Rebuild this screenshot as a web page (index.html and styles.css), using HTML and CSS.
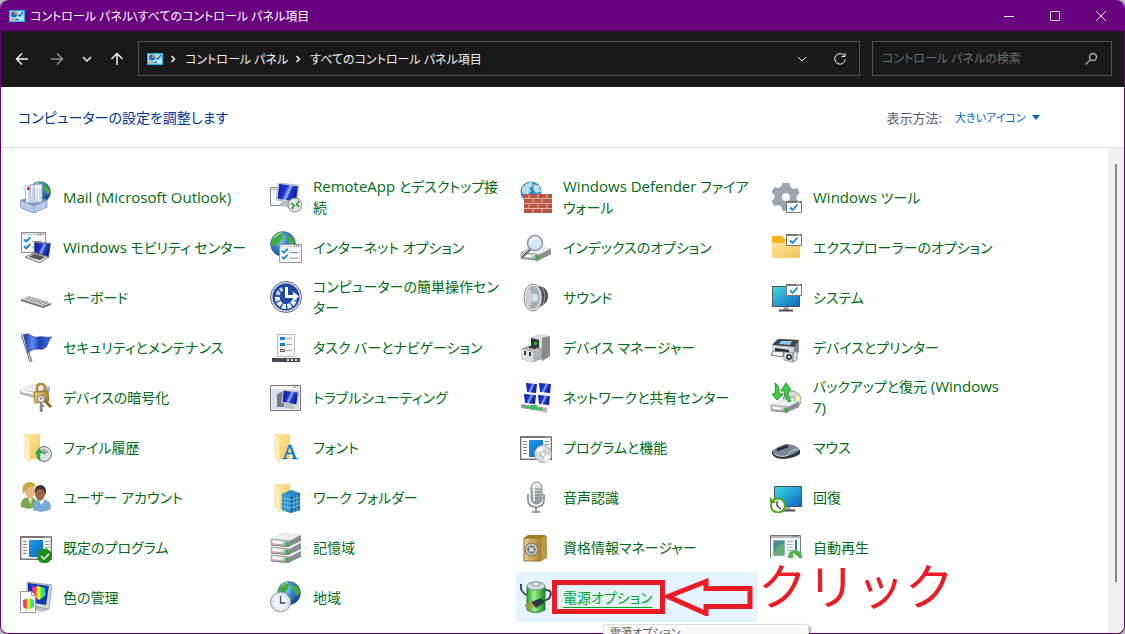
FILE: index.html
```html
<!DOCTYPE html>
<html lang="ja">
<head>
    <meta charset="UTF-8">
    <meta name="viewport" content="width=device-width, initial-scale=1.0">
    <title>コントロール パネル\すべてのコントロール パネル項目</title>
    <link rel="stylesheet" href="styles.css">
</head>
<body>

<!-- shared gradients and icon parts -->
<svg class="sprite" width="0" height="0" aria-hidden="true">
    <defs>
        <radialGradient id="sea" cx="35%" cy="30%" r="75%"><stop offset="0" stop-color="#a5dcfa"/><stop offset=".45" stop-color="#3c86d4"/><stop offset="1" stop-color="#123a8c"/></radialGradient>
        <linearGradient id="screen" x1="0" y1="0" x2="1" y2=".4"><stop offset="0" stop-color="#0a18a0"/><stop offset=".45" stop-color="#1a36d0"/><stop offset=".62" stop-color="#a3b8fa"/><stop offset=".7" stop-color="#2440cc"/><stop offset="1" stop-color="#0c1a98"/></linearGradient>
        <linearGradient id="cyan" x1="0" y1="0" x2="1" y2="1"><stop offset="0" stop-color="#3ddbe0"/><stop offset="1" stop-color="#0c66c4"/></linearGradient>
        <linearGradient id="metal" x1="0" y1="0" x2="0" y2="1"><stop offset="0" stop-color="#f6f6f6"/><stop offset="1" stop-color="#8f9296"/></linearGradient>
        <linearGradient id="yellow" x1="0" y1="0" x2="1" y2="1"><stop offset="0" stop-color="#ffe9a6"/><stop offset="1" stop-color="#f3c552"/></linearGradient>
        <linearGradient id="gold" x1="0" y1="0" x2="1" y2="0"><stop offset="0" stop-color="#e9d08a"/><stop offset="1" stop-color="#a8822c"/></linearGradient>
        <linearGradient id="green" x1="0" y1="0" x2="1" y2="0"><stop offset="0" stop-color="#2ba32b"/><stop offset=".4" stop-color="#9bf08f"/><stop offset="1" stop-color="#128a1c"/></linearGradient>
        <linearGradient id="rainbow" x1="0" y1="0" x2="1" y2="0"><stop offset="0" stop-color="#f2f"/><stop offset=".25" stop-color="#f33"/><stop offset=".5" stop-color="#ff3"/><stop offset=".75" stop-color="#3e3"/><stop offset="1" stop-color="#2cf"/></linearGradient>
        <linearGradient id="blue" x1="0" y1="0" x2="1" y2="1"><stop offset="0" stop-color="#2a9ae8"/><stop offset="1" stop-color="#0067c0"/></linearGradient>
        <linearGradient id="cloth" x1="0" y1="0" x2="1" y2="0"><stop offset="0" stop-color="#1c3aa0"/><stop offset=".3" stop-color="#5f8af0"/><stop offset=".55" stop-color="#1d3fb4"/><stop offset="1" stop-color="#4a78e8"/></linearGradient>
    </defs>
    <symbol id="i-globe" viewBox="0 0 24 24">
        <circle cx="12" cy="12" r="11.5" fill="url(#sea)" stroke="#2c5a9c" stroke-width=".5"/>
        <path d="M3 6c2-3 5-5 8-5l2 2-2 2 1 2-3 3-2 3-3-1-2 2-1-3zM15 3c4 1 7 4 8 8l-2 4-3-2-1-4-3-1 2-2zM9 14l4 1 2 3-3 5-3-4z" fill="#45ab3c"/>
        <path d="M4 6c2-2 4-4 7-4" fill="none" stroke="#e8ffe0" opacity=".7"/>
    </symbol>
    <symbol id="i-folder" viewBox="0 0 17 30">
        <path d="M1 1h15v25H5z" fill="url(#yellow)"/>
        <path d="M1 1l5 4v24l-5-4z" fill="#fff0b8" stroke="#e9cb77" stroke-width=".5"/>
    </symbol>
    <symbol id="i-check" viewBox="0 0 16 12">
        <path d="M.5.5h15v11H.5z" fill="#fff" stroke="#777"/>
        <path d="M0 0h16v2H0z" fill="#777"/>
        <path d="M11 1h1M13 1h1" stroke="#fff"/>
        <path d="M4 6.5L6.5 9l5-5.5" fill="none" stroke="#1683dd" stroke-width="1.8"/>
    </symbol>
    <symbol id="i-list" viewBox="0 0 24 20">
        <path d="M.5.5h23v19H.5z" fill="#f8f8fa" stroke="#8c8f95"/>
        <path d="M1 2.5h22" stroke="#c8cbd0"/>
        <path d="M16 2h1M18 2h1M20 2h1" stroke="#555"/>
        <path d="M3 7l2 2 4-4M3 13.5l2 2 4-4" fill="none" stroke="#1c8ccc" stroke-width="2"/>
        <path d="M11 9h9M11 15h9" stroke="#888"/>
    </symbol>
    <symbol id="i-window" viewBox="0 0 32 24">
        <path d="M.7.7h30.6v22.6H.7z" fill="#fff" stroke="#777" stroke-width="1.4"/>
        <path d="M0 0h32v2H0z" fill="#777"/>
        <path d="M25 1h1M27.500 1h1M30 1h1" stroke="#fff"/>
        <path d="M3 5.5h4M3 8.5h4M3 11.5h4M3 14.5h4M3 17.5h4M25 5.5h4M25 8.5h4M25 11.5h4M25 14.5h4M25 17.5h4" stroke="#888"/>
        <path d="M9 4h14v17H9z" fill="url(#blue)"/>
    </symbol>
    <symbol id="i-drive" viewBox="0 0 32 14">
        <path d="M1 6L14 0l17 2v6L18 14 1 12z" fill="#8b8e92"/>
        <path d="M1 6L14 0l17 2-12 6z" fill="#eceef0"/>
        <path d="M1 6l18 2v6L1 12z" fill="url(#metal)" stroke="#777" stroke-width=".6"/>
        <path d="M3 9l9 1" stroke="#fff" stroke-width="2"/>
        <path d="M15.500 8.500l3 .5v4l-3-.5z" fill="#27b52d"/>
    </symbol>
    <symbol id="i-monitor" viewBox="0 0 24 24">
        <path d="M7 17l8 2v2l6 1-7 2-10-3z" fill="#b6bac0"/>
        <path d="M3 0l20 2-2 18L1 16z" fill="#dfe2e6" stroke="#9a9ea6" stroke-width=".6"/>
        <path d="M4 1l18 2-2 15L2.500 15z" fill="url(#screen)"/>
    </symbol>
    <symbol id="i-display" viewBox="0 0 28 26">
        <path d="M0 0h28v21H0z" fill="#555"/>
        <path d="M1 1h26v19H1z" fill="url(#cyan)"/>
        <path d="M11.500 21h5v3h-5z" fill="#aaa"/>
        <path d="M7 23.500h14v2H7z" fill="#4a4d55"/>
    </symbol>
    <symbol id="i-panel" viewBox="0 0 16 12">
        <path d="M0 0h16v12H0z" fill="#28aeea"/>
        <path d="M1 1h14v10H1z" fill="#9bdcfb"/>
        <circle cx="5" cy="4.5" r="3" fill="#1470c8"/>
        <path d="M5 4.500V1.200a3.300 3.300 0 0 1 3 3.300z" fill="#f08b20"/>
        <path d="M9 5l2 1 3-4M7 9.500h3" fill="none" stroke="#0f5db5" stroke-width="1.2"/>
        <path d="M2 9.500h5" stroke="#f08b20" stroke-width="1.2"/>
        <path d="M10 8.500h4" stroke="#fff" stroke-width="1.5"/>
    </symbol>
</svg>

<div class="window">
    <header class="titlebar">
        <svg class="panel-icon" aria-hidden="true"><use href="#i-panel"/></svg>
        <h1 class="window-title">コントロール パネル\すべてのコントロール パネル項目</h1>
        <div class="window-buttons">
            <button type="button" aria-label="最小化"><svg viewBox="0 0 12 12"><path d="M1 6.500h10"/></svg></button>
            <button type="button" aria-label="最大化"><svg viewBox="0 0 12 12"><rect x="1.5" y="1.5" width="9" height="9" rx="1"/></svg></button>
            <button type="button" aria-label="閉じる"><svg viewBox="0 0 12 12"><path d="M1 1l10 10M11 1L1 11"/></svg></button>
        </div>
    </header>

    <nav class="toolbar">
        <div class="nav-buttons">
            <button type="button" class="back" aria-label="戻る"><svg viewBox="0 0 14 14"><path d="M13 7H1.500M7 1.500L1.500 7 7 12.500"/></svg></button>
            <button type="button" aria-label="進む" disabled><svg viewBox="0 0 14 14"><path d="M1 7h11.500M7 1.500L12.500 7 7 12.500"/></svg></button>
            <button type="button" aria-label="履歴"><svg viewBox="0 0 14 14"><path d="M3 5l4 4 4-4"/></svg></button>
            <button type="button" aria-label="上へ"><svg viewBox="0 0 14 14"><path d="M7 13V1.500M1.500 7L7 1.500 12.500 7"/></svg></button>
        </div>
        <div class="address">
            <svg class="panel-icon" aria-hidden="true"><use href="#i-panel"/></svg>
            <svg class="crumb-arrow" viewBox="0 0 8 8"><path d="M2.500 1L5.500 4l-3 3"/></svg>
            <a href="#">コントロール パネル</a>
            <svg class="crumb-arrow" viewBox="0 0 8 8"><path d="M2.500 1L5.500 4l-3 3"/></svg>
            <a href="#">すべてのコントロール パネル項目</a>
            <button type="button" class="address-history" aria-label="以前の場所"><svg viewBox="0 0 14 14"><path d="M3 5l4 4 4-4"/></svg></button>
            <button type="button" aria-label="更新"><svg viewBox="0 0 14 14"><path d="M11.500 4A5.300 5.300 0 1 0 12.300 7.500M12 1v3.500H8.500"/></svg></button>
        </div>
        <div class="search">
            <input type="text" aria-label="コントロール パネルの検索" placeholder="コントロール パネルの検索">
            <svg viewBox="0 0 14 14"><circle cx="9" cy="5" r="3.5"/><path d="M6.500 7.500L1.500 12.500"/></svg>
        </div>
    </nav>

    <section class="heading">
        <h2>コンピューターの設定を調整します</h2>
        <div class="view-by">
            <label for="view">表示方法:</label>
            <select id="view"><option>大きいアイコン</option></select>
            <svg viewBox="0 0 8 5" aria-hidden="true"><path d="M0 0h8L4 5z"/></svg>
        </div>
    </section>

    <main class="content">
        <div class="items">
            <a class="item" href="#">
                <svg class="icon" viewBox="0 0 32 32"><use href="#i-globe" x="9" y="0" width="22" height="22"/><path d="M0 19l14-4 13 4v7l-13 6L1 27z" fill="#7b9dce"/><path d="M5 5l11-2v19H6z" fill="#fff" stroke="#8398ba" stroke-width=".7"/><path d="M10 4l9-1v19h-8z" fill="#edf2fa" stroke="#8398ba" stroke-width=".7"/><path d="M14 4l8-1v18h-7z" fill="#fff" stroke="#8398ba" stroke-width=".7"/><path d="M9 8v14M13 7v15M17 7v14M20 7v13" stroke="#8ea4c6" stroke-width=".8"/><path d="M7 6h3v3H7z" fill="#e23b2d"/><path d="M0 19l14 6 13-6v7l-13 6L1 27z" fill="#b9cdea" stroke="#6c87b5" stroke-width=".7"/><path d="M14 25v7" stroke="#8ca5cd"/></svg>
                <span class="latin">Mail (Microsoft Outlook)</span>
            </a>
            <a class="item" href="#">
                <svg class="icon" viewBox="0 0 32 32"><path d="M.5 6.500h18v18H.5z" fill="#f5f6f9" stroke="#888"/><path d="M1 8.500h17" stroke="#aaa"/><use href="#i-monitor" x="5" y="2" width="25" height="25"/><circle cx="25" cy="24" r="7" fill="#e3e5e7" stroke="#86898d"/><path d="M21 22l3 2.500-2 3.500M29 20l-2.500 3.500L29.500 26" fill="none" stroke="#259a36" stroke-width="1.6"/></svg>
                <span><span class="latin">RemoteApp</span> とデスクトップ接<br>続</span>
            </a>
            <a class="item" href="#">
                <svg class="icon" viewBox="0 0 32 32"><circle cx="11" cy="11" r="10.5" fill="#3289bd"/><path d="M2 7c3-4 7-6 10-6l1 4-4 2 2 3-4 4-5-2zM14 3l5 2 2 6-5 1-3-4z" fill="#b8ddeb"/><path d="M4 13h28v19H4z" fill="#b95543"/><path d="M4 17.500h28M4 22.500h28M4 27.500h28M9 13v4.500M18 13v4.500M27 13v4.500M13 17.500v5M22 17.500v5M9 22.500v5M18 22.500v5M27 22.500v5M13 27.500V32M22 27.500V32" stroke="#e1b1a5"/></svg>
                <span><span class="latin">Windows Defender</span> ファイア<br>ウォール</span>
            </a>
            <a class="item" href="#">
                <svg class="icon" viewBox="0 0 32 32"><path d="M12.500 2h7l1 4 3 2 4-1 2 5-3 3v3l3 3-3 5-4-1-3 2-1 3h-6l-1-4-3-2-4 1-3-5 3-3v-3l-3-3 3-5 4 1 3-2z" fill="#9aa5b1"/><circle cx="16" cy="16" r="4" fill="#fff"/><use href="#i-check" x="16" y="20" width="16" height="12"/></svg>
                <span><span class="latin">Windows</span> ツール</span>
            </a>

            <a class="item" href="#">
                <svg class="icon" viewBox="0 0 32 32"><use href="#i-list" x="1" y="1" width="25" height="21"/><path d="M14 11l17 1-2 14-15-4z" fill="#5a6070"/><path d="M15 12l15 1-2 12-13-4z" fill="url(#screen)"/><path d="M5 26l9-4 15 4-10 6z" fill="#d7d9dc" stroke="#555" stroke-width=".7"/><path d="M9 26l5-3 11 3-5 3z" fill="#555"/></svg>
                <span><span class="latin">Windows</span> モビリティ センター</span>
            </a>
            <a class="item" href="#">
                <svg class="icon" viewBox="0 0 32 32"><use href="#i-globe" x="0" y="0" width="26" height="26"/><use href="#i-list" x="9" y="13" width="23" height="19"/></svg>
                <span>インターネット オプション</span>
            </a>
            <a class="item" href="#">
                <svg class="icon" viewBox="0 0 32 32"><use href="#i-drive" x="0" y="15" width="32" height="15"/><path d="M10 18L2 26" stroke="#63686e" stroke-width="3"/><path d="M9 18L2 25" stroke="#cfd3d8"/><circle cx="15" cy="12" r="7.5" fill="#cfe7fb" fill-opacity=".9" stroke="#8d959e" stroke-width="1.5"/><path d="M10 12a6 6 0 0 1 8-5" fill="none" stroke="#fff" stroke-width="2"/></svg>
                <span>インデックスのオプション</span>
            </a>
            <a class="item" href="#">
                <svg class="icon" viewBox="0 0 32 32"><path d="M2 6q0-1 1-1h9l3 3h14q1 0 1 1v5H2z" fill="#f7b51c"/><path d="M2 12h11l3-3h14v17q0 1-1 1H3q-1 0-1-1z" fill="url(#yellow)"/><use href="#i-check" x="16" y="3" width="16" height="12"/></svg>
                <span>エクスプローラーのオプション</span>
            </a>

            <a class="item" href="#">
                <svg class="icon" viewBox="0 0 32 32"><path d="M1 18l8-3 22 7v2l-8 3-22-7z" fill="#777"/><path d="M1 18l8-3 22 7-8 3z" fill="#e4e5e6"/><path d="M5 18l20 6M7 17l20 6M9 16l19 6" stroke="#777" stroke-dasharray="2 1"/></svg>
                <span>キーボード</span>
            </a>
            <a class="item" href="#">
                <svg class="icon" viewBox="0 0 32 32"><circle cx="16" cy="16" r="15.5" fill="#d7dbe4" stroke="#6a7384"/><circle cx="16" cy="16" r="13.5" fill="#2248a6"/><path d="M7.500 16a8.500 8.500 0 1 0 17 2" fill="none" stroke="#e9f0fc" stroke-width="5" stroke-dasharray="4 1.2"/><path d="M7.500 14a9 9 0 0 1 5-6" fill="none" stroke="#c6d5f0" stroke-width="4" stroke-dasharray="4 1.2"/><path d="M15 6h3v8h5v-3.500l6 5-6 5V17h-8z" fill="#fff"/></svg>
                <span>コンピューターの簡単操作セン<br>ター</span>
            </a>
            <a class="item" href="#">
                <svg class="icon" viewBox="0 0 32 32"><path d="M13 4l10 2q5 3 5 9t-5 9l-9 5z" fill="#46494d"/><path d="M22 6q6 9 0 19" fill="none" stroke="#8c9095" stroke-width="1.5"/><ellipse cx="13" cy="16.5" rx="9" ry="13.5" fill="#e9eaeb" stroke="#85888c"/><ellipse cx="13" cy="16.5" rx="7" ry="11.5" fill="#a7afb6"/><path d="M9 7q-5 10 0 19l5-9z" fill="#cdd3d8"/><ellipse cx="15" cy="16.5" rx="3" ry="4" fill="#d4e2ec"/></svg>
                <span>サウンド</span>
            </a>
            <a class="item" href="#">
                <svg class="icon" viewBox="0 0 32 32"><use href="#i-display" x="2" y="5" width="28" height="26"/><use href="#i-check" x="16" y="3" width="16" height="12"/></svg>
                <span>システム</span>
            </a>

            <a class="item" href="#">
                <svg class="icon" viewBox="0 0 32 32"><path d="M2 3l9 28" stroke="#777" stroke-width="3"/><path d="M2 3l9 28" stroke="#ddd"/><path d="M4 4c5-4 8 4 14 2 5-1 8 1 14 0-5 4-3 10-9 12-6 1-8-2-15 4z" fill="url(#cloth)" stroke="#1a3590" stroke-width=".6"/></svg>
                <span>セキュリティとメンテナンス</span>
            </a>
            <a class="item" href="#">
                <svg class="icon" viewBox="0 0 32 32"><path d="M7.500 3.500h17v22h-17z" fill="#f5f5f5" stroke="#bbb"/><path d="M16 7.500h6M16 13.500h6M16 19.500h6" stroke="#aaa"/><path d="M10 6h5v3h-5zM10 12h5v3h-5z" fill="#1683cd"/><path d="M10.500 18.500h4v2h-4z" fill="#fff" stroke="#555"/><path d="M2 27h28v4H2z" fill="#464d56"/><path d="M17 29h2M21 29h2M25 29h2" stroke="#ddd" stroke-width="2"/></svg>
                <span>タスク バーとナビゲーション</span>
            </a>
            <a class="item" href="#">
                <svg class="icon" viewBox="0 0 32 32"><path d="M11 6l8-3 11 2v20l-7 5-12-4z" fill="#d6d8da"/><path d="M22 7l8-2v20l-8 5z" fill="#8a8d90"/><path d="M11 7l8 2v12l-8-2z" fill="#303236"/><path d="M14 11h3v3h-3z" fill="#21bd33"/><path d="M2 18l7-3 13 3v9l-9 4-11-3z" fill="#b2b4b7" stroke="#777" stroke-width=".6"/><path d="M2 18l11 3v10L2 28z" fill="#dfe0e2"/><path d="M4 20h2v4H4zM9 21h2v4H9zM9 15l7 1v2l-7-1z" fill="#35373b"/></svg>
                <span>デバイス マネージャー</span>
            </a>
            <a class="item" href="#">
                <svg class="icon" viewBox="0 0 32 32"><path d="M2 14l6-6 21 1v12l-6 6-21-3z" fill="#888b90"/><path d="M2 14l6-6 21 1-5 7z" fill="#3f444a"/><path d="M11 10h11l-2 4-11-1z" fill="#8ac8e8"/><path d="M2 14l22 2v9L2 23z" fill="#d1d3d5"/><path d="M5 17l14 2v3L5 20z" fill="#272a2f"/><path d="M3 20l11 1-2 5-11-2z" fill="#f7f7f7" stroke="#777"/><path d="M14 21l9 1v9l-9-2zM23 22l4-2v9l-4 2z" fill="#e2e3e4" stroke="#777" stroke-width=".7"/><circle cx="19" cy="26" r="3" fill="#34393e"/><circle cx="19" cy="26" r="1.2" fill="#c9ecff"/></svg>
                <span>デバイスとプリンター</span>
            </a>

            <a class="item" href="#">
                <svg class="icon" viewBox="0 0 32 32"><path d="M0 9l13-6 17 2v5L14 17 0 13z" fill="#b1b3b7"/><path d="M0 9l13-6 17 2-14 6z" fill="#ededf0"/><path d="M1 10l14 3" stroke="#fff" stroke-width="2"/><path d="M17 12V7q0-4 4-4t4 4v5" fill="none" stroke="#b38b34" stroke-width="2.5"/><path d="M14 11l14-1 1 10-14 2z" fill="url(#gold)" stroke="#9b731d"/><path d="M25 20l6 6" stroke="#8d651a" stroke-width="3"/><circle cx="21" cy="18" r="3.5" fill="#eee" stroke="#777"/><path d="M21 21v10M21 25h3M21 29h2" stroke="#85888a" stroke-width="2.5"/><circle cx="21" cy="17.5" r="1" fill="#555"/></svg>
                <span>デバイスの暗号化</span>
            </a>
            <a class="item" href="#">
                <svg class="icon" viewBox="0 0 32 32"><path d="M.5 4.500h30v25H.5z" fill="#e7eaf1" stroke="#777"/><path d="M1 5h29v3H1z" fill="#f8f8f8"/><path d="M23 6h1M25 6h1M27 6h1" stroke="#555"/><path d="M2 9h27v19H2z" fill="#d8deea"/><path d="M7 13l7-3v16H7z" fill="#737b85"/><use href="#i-monitor" x="10" y="9" width="20" height="19"/></svg>
                <span>トラブルシューティング</span>
            </a>
            <a class="item" href="#">
                <svg class="icon" viewBox="0 0 32 32"><path d="M6 2l11 1-1 9-9-1z" fill="url(#screen)"/><path d="M19 2l12 1-1 9-10-1z" fill="url(#screen)"/><path d="M4 13l12 1-1 9-10-1z" fill="url(#screen)"/><path d="M18 14l12 1-1 9-10-1z" fill="url(#screen)"/><path d="M1 25l26 4" stroke="#9a9da2" stroke-width="4"/><path d="M3 25l22 4" stroke="#3fbd57" stroke-width="2"/><path d="M11 24h6v5h-6z" fill="#42bc65"/><path d="M23 27l4 1v4l-5-1z" fill="#b9bdc0"/></svg>
                <span>ネットワークと共有センター</span>
            </a>
            <a class="item" href="#">
                <svg class="icon" viewBox="0 0 32 32"><circle cx="22" cy="19" r="9" fill="#d6d7db" stroke="#92939a"/><path d="M22 19l7-5 2 6z" fill="#fff2a6"/><circle cx="22" cy="19" r="3" fill="#fff" stroke="#888"/><use href="#i-drive" x="0" y="18" width="30" height="14"/><path d="M5 2q5 3 4 11h4l-6 6-5-6h3q1-6 0-11z" fill="#3fd048" stroke="#21922c"/><path d="M19 21q-5-4-5-11h-3l5-8 5 7h-3q-1 6 3 11z" fill="#3fd048" stroke="#21922c"/></svg>
                <span>バックアップと復元 <span class="latin">(Windows<br>7)</span></span>
            </a>

            <a class="item" href="#">
                <svg class="icon" viewBox="0 0 32 32"><use href="#i-folder" x="4" y="2" width="17" height="30"/><circle cx="24" cy="23" r="7.5" fill="#d7dfdf" stroke="#727b7c"/><path d="M24 18v5l4-3" fill="none" stroke="#555"/><path d="M20 30q-4-3-2-7h-3l4-6 5 5h-3q-2 3 0 8z" fill="#27a63e"/></svg>
                <span>ファイル履歴</span>
            </a>
            <a class="item" href="#">
                <svg class="icon" viewBox="0 0 32 32"><use href="#i-folder" x="4" y="2" width="17" height="30"/><text class="font-letter" x="12" y="28">A</text></svg>
                <span>フォント</span>
            </a>
            <a class="item" href="#">
                <svg class="icon" viewBox="0 0 32 32"><use href="#i-window" x="0" y="5" width="32" height="24"/><circle cx="23" cy="23" r="8.5" fill="#d6d9db" stroke="#a2a7aa"/><path d="M23 23l-7-4q3-4 7-4zM23 23l8 2q-2 5-6 6z" fill="#f7f7f7"/><circle cx="23" cy="23" r="2.5" fill="#fff" stroke="#aaa"/></svg>
                <span>プログラムと機能</span>
            </a>
            <a class="item" href="#">
                <svg class="icon" viewBox="0 0 32 32"><path d="M2 20l14-7 14 6v4q-5 4-16 5-10 0-12-5z" fill="#31363e"/><path d="M2 20q6-5 14-7 10 0 14 6-7 5-16 7-9 0-12-6z" fill="#798796"/><path d="M7 19l11-4" stroke="#252b33" stroke-width="2.5"/><path d="M4 23q7 4 14 1 1-4 10-6" fill="none" stroke="#c5cbd2"/></svg>
                <span>マウス</span>
            </a>

            <a class="item" href="#">
                <svg class="icon" viewBox="0 0 32 32"><path d="M1 26q-1-10 8-10 8 0 8 9l-8 3z" fill="#7ba652"/><path d="M7 15l5 1-1 8z" fill="#f2ddbb"/><ellipse cx="10" cy="10" rx="5" ry="7" fill="#e4b788"/><path d="M3 13Q1 2 9 1q6 0 7 5-5-2-8 1z" fill="#c8a63e"/><path d="M13 29q-1-11 9-11 9 0 9 10-9 5-18 1z" fill="#79a9d8"/><path d="M18 17h6v4l-3 3z" fill="#e5edf5"/><ellipse cx="20" cy="13" rx="5" ry="6.5" fill="#9a6745"/><path d="M15 12q-1-8 6-8 6 1 5 10-2-5-5-6-3-1-6 4z" fill="#393434"/></svg>
                <span>ユーザー アカウント</span>
            </a>
            <a class="item" href="#">
                <svg class="icon" viewBox="0 0 32 32"><use href="#i-folder" x="4" y="2" width="17" height="30"/><path d="M12 13l9-4 9 3v17l-10 3-8-3z" fill="#2389c7"/><path d="M21 15l9-3v17l-9 3z" fill="#126da9"/><path d="M12 17l9 2 9-3M12 21l9 2 9-3M12 25l9 2 9-3M15 12v18M18 13v17M24 14v17M27 13v17" fill="none" stroke="#87cce9" stroke-width=".8"/></svg>
                <span>ワーク フォルダー</span>
            </a>
            <a class="item" href="#">
                <svg class="icon" viewBox="0 0 32 32"><path d="M8 13v6q0 7 8 7t8-7v-6M16 26v6M12 31h8" fill="none" stroke="#888b92" stroke-width="1.7"/><rect x="11" y="1" width="11" height="22" rx="5.5" fill="url(#metal)" stroke="#85888f"/><path d="M12 8h9M12 11h9M12 14h9M12 17h9" stroke="#787d87"/><path d="M14 4v16" stroke="#fff" stroke-width="2" opacity=".7"/></svg>
                <span>音声認識</span>
            </a>
            <a class="item" href="#">
                <svg class="icon" viewBox="0 0 32 32"><use href="#i-display" x="4" y="5" width="28" height="26"/><circle cx="8" cy="24.5" r="7" fill="#fff" stroke="#4aaa17" stroke-width="2"/><path d="M0 16v6h6z" fill="#4aaa17"/><path d="M7 20v5l4 3" fill="none" stroke="#333" stroke-width="1.3"/></svg>
                <span>回復</span>
            </a>

            <a class="item" href="#">
                <svg class="icon" viewBox="0 0 32 32"><use href="#i-window" x="0" y="5" width="32" height="24"/><circle cx="24.5" cy="25" r="7.5" fill="#248c1b"/><path d="M21 25l3 3 5-5" fill="none" stroke="#fff" stroke-width="1.3"/></svg>
                <span>既定のプログラム</span>
            </a>
            <a class="item" href="#">
                <svg class="icon" viewBox="0 0 32 32"><use href="#i-drive" x="0" y="18" width="32" height="14"/><use href="#i-drive" x="0" y="10" width="32" height="14"/><use href="#i-drive" x="0" y="2" width="32" height="14"/></svg>
                <span>記憶域</span>
            </a>
            <a class="item" href="#">
                <svg class="icon" viewBox="0 0 32 32"><path d="M5 6l3-2h17l2 2v20l-6 4H5z" fill="#a57d2e"/><path d="M4 7h17v23H4z" fill="url(#gold)" stroke="#93702a"/><path d="M21 7l6-2v22l-6 3z" fill="#ba9749"/><circle cx="11.5" cy="18.5" r="6.5" fill="#bfc0b8" stroke="#77736a"/><circle cx="11.5" cy="18.5" r="3.5" fill="none" stroke="#777"/><path d="M7 18.500h9M11.500 14v9" stroke="#777"/><circle cx="11.5" cy="18.5" r="1.5" fill="#eee"/></svg>
                <span>資格情報マネージャー</span>
            </a>
            <a class="item" href="#">
                <svg class="icon" viewBox="0 0 32 32"><path d="M.5 4.500h30v25H.5z" fill="#f6f7f8" stroke="#777"/><path d="M1 6h29" stroke="#777"/><path d="M23 5h1M25 5h1M27 5h1" stroke="#333"/><path d="M3.500 9.500h11v15h-11z" fill="#4a8d91" stroke="#8ab3c1"/><path d="M4 22q4-8 10-10v12H4z" fill="#67ad70"/><path d="M17 10.500h6M17 13.500h6M17 16.500h6M17 19.500h6" stroke="#aaa"/><path d="M26 9v10" stroke="#287a9b" stroke-width="2"/><circle cx="25" cy="26" r="7" fill="#4eb14b"/><path d="M23 22l6 4-6 4z" fill="#fff"/></svg>
                <span>自動再生</span>
            </a>

            <a class="item" href="#">
                <svg class="icon" viewBox="0 0 32 32"><path d="M14 23l10 3 5 3-8 2-8-3z" fill="#c0c3c8"/><path d="M7 1l25 3-3 24-22-4z" fill="#d4d6db" stroke="#888" stroke-width=".7"/><path d="M8 2l21 3-3 19-18-3z" fill="#1435b3"/><path d="M12 6l6-1 7 2v8l-6 4-6-4z" fill="url(#rainbow)"/><path d="M.5 10.500h11l4 4v17H.5z" fill="#fff" stroke="#999"/><path d="M11.500 10.500v4h4" fill="none" stroke="#999"/><path d="M3 19l6-2 5 2v7l-6 3-5-3z" fill="url(#rainbow)"/></svg>
                <span>色の管理</span>
            </a>
            <a class="item" href="#">
                <svg class="icon" viewBox="0 0 32 32"><use href="#i-globe" x="7" y="0" width="24" height="24"/><circle cx="10.5" cy="21" r="10" fill="#e0e8ef" stroke="#8c969f"/><circle cx="10.5" cy="21" r="7.5" fill="#f2f5f7" stroke="#9cadb9" stroke-dasharray="1 3"/><path d="M10.500 15v7h5" fill="none" stroke="#3a4c5e" stroke-width="1.3"/></svg>
                <span>地域</span>
            </a>
            <div class="item-wrap">
                <a class="item active" href="#">
                    <svg class="icon" viewBox="0 0 32 32"><path d="M1 3v5q2 5 8 7" fill="none" stroke="#3d4c55" stroke-width="2"/><path d="M24 9q9-1 6 7-1 3-11 5" fill="none" stroke="#34434c" stroke-width="2"/><path d="M7 5v24q8 5 18 0V5z" fill="url(#green)" stroke="#327c3d"/><ellipse cx="16" cy="5" rx="9" ry="4" fill="#d5dfdf" stroke="#7b9390"/><ellipse cx="16" cy="3" rx="4" ry="2" fill="#f7fafa" stroke="#889"/><path d="M11 21l10-4 4 4-9 6z" fill="#303842"/><path d="M12 22l-7 3M14 25l-6 3" stroke="#bd913d" stroke-width="2"/></svg>
                    <span>電源オプション</span>
                </a>
                <div class="callout">
                    <div class="callout-box"></div>
                    <svg class="callout-arrow" viewBox="0 0 90 38"><path d="M4 18.500L42 3.500v7h44v18H42v7z"/></svg>
                    <strong class="callout-text">クリック</strong>
                </div>
                <div class="tooltip" role="tooltip">電源オプション</div>
            </div>
        </div>
        <div class="scrollbar"><div class="thumb"></div></div>
    </main>
</div>

</body>
</html>
```
FILE: styles.css
```css
* {
    box-sizing: border-box;
}
body {
    margin: 0;
    height: 100vh;
    overflow: hidden;
    background-color: #b9b9b9;
    font-family: "Open Sans", "Noto Sans CJK JP", sans-serif;
    font-feature-settings: "palt";
    font-size: 12px;
}
button, input, select {
    font: inherit;
    font-feature-settings: inherit;
    color: inherit;
    background: none;
    border: none;
    padding: 0;
}
a {
    color: inherit;
    text-decoration: none;
}
.sprite {
    position: absolute;
}
.window {
    display: flex;
    flex-direction: column;
    height: 100vh;
    border: 1px solid #69007f;
    border-top: none;
    border-radius: 8px;
    background-color: #ffffff;
}

/* title bar */
.titlebar {
    display: flex;
    align-items: center;
    height: 31px;
    padding-left: 8px;
    background-color: #69007f;
    border-radius: 8px 8px 0 0;
    color: #ffffff;
}
.panel-icon {
    width: 16px;
    height: 12px;
    flex: none;
}
.window-title {
    margin: 0 0 0 5px;
    font-size: 12px;
    font-weight: normal;
}
.window-buttons {
    display: flex;
    margin-left: auto;
}
.window-buttons button {
    display: flex;
    align-items: center;
    justify-content: center;
    width: 46px;
    height: 31px;
}
.window-buttons svg {
    width: 12px;
    height: 12px;
    fill: none;
    stroke: #ffffff;
}

/* toolbar */
.toolbar {
    display: flex;
    align-items: center;
    gap: 6px;
    height: 56px;
    padding: 0 12px 1px 6px;
    background-color: #191919;
    color: #f2f2f2;
}
.toolbar svg {
    fill: none;
    stroke: #f2f2f2;
}
.nav-buttons {
    display: flex;
}
.nav-buttons button,
.address button {
    display: flex;
    align-items: center;
    justify-content: center;
    width: 30px;
    height: 30px;
}
.nav-buttons .back {
    margin-right: 5px;
}
.nav-buttons svg {
    width: 14px;
    height: 14px;
    stroke-width: 1.5px;
}
.nav-buttons button:disabled svg {
    stroke: #8f8f8f;
}
.address,
.search {
    display: flex;
    align-items: center;
    height: 35px;
    border: 1px solid #535353;
}
.address {
    flex: 1;
    padding: 0 4px 0 8px;
}
.toolbar .panel-icon {
    stroke: none;
}
.crumb-arrow {
    width: 8px;
    height: 8px;
    margin: 0 8px 0 6px;
    stroke-width: 1.5px;
}
.address .address-history {
    margin: 0 8px 0 auto;
}
.address button svg {
    width: 14px;
    height: 14px;
}
.search {
    width: 240px;
    margin-left: 6px;
    padding: 0 13px 0 9px;
}
.search input {
    flex: 1;
    min-width: 0;
}
.search input::placeholder {
    color: #6f6f6f;
    opacity: 1;
}
.search svg {
    width: 14px;
    height: 14px;
    stroke: #a5a5a5;
    stroke-width: 1.5px;
}

/* heading row */
.heading {
    display: flex;
    align-items: center;
    justify-content: space-between;
    height: 60px;
    padding: 0 84px 0 17px;
}
.heading h2 {
    margin: 0;
    font-size: 14px;
    font-weight: normal;
    color: #003399;
}
.view-by {
    display: flex;
    align-items: center;
    font-size: 13px;
    color: #575d6e;
}
.view-by select {
    appearance: none;
    margin: 0 5px 0 13px;
    color: #0066cc;
    font-size: 11px;
}
.view-by svg {
    width: 8px;
    height: 5px;
    fill: #0066cc;
}

/* items */
.content {
    display: flex;
    flex: 1;
    min-height: 0;
    border-top: 1px solid #dbe5f0;
}
.items {
    display: grid;
    grid-template-columns: repeat(auto-fill, 242px);
    grid-auto-rows: 50px;
    column-gap: 8px;
    flex: 1;
    padding: 24px 0 0 15px;
}
.item {
    display: flex;
    align-items: center;
    gap: 11px;
    height: 50px;
    padding-left: 4px;
    font-size: 14px;
    line-height: 21px;
    color: #006c14;
    white-space: nowrap;
}
.latin {
    font-size: 15px;
}
.icon {
    width: 32px;
    height: 32px;
    flex: none;
}
.font-letter {
    font-family: "Liberation Serif", serif;
    font-size: 22px;
    fill: #0876c5;
    stroke: #0876c5;
    stroke-width: .5px;
}
.item-wrap {
    position: relative;
}
.item.active {
    background-color: #e5f3ff;
    border-radius: 2px;
    color: #00a51c;
}
.item.active span {
    text-decoration: underline;
    text-underline-offset: 4px;
}

/* red marks over the power item */
.callout {
    position: absolute;
    top: 0;
    left: 36px;
    display: flex;
    align-items: center;
    width: max-content;
    height: 50px;
}
.callout-box {
    width: 113px;
    height: 34px;
    border: 5px solid #ed1c24;
}
.callout-arrow {
    width: 90px;
    height: 38px;
    margin-left: -1px;
    fill: none;
    stroke: #ed1c24;
    stroke-width: 5px;
}
.callout-text {
    align-self: flex-end;
    height: 64px;
    margin-left: 4px;
    background-color: #ffffff;
    font-size: 49px;
    font-feature-settings: normal;
    line-height: 56px;
    font-weight: normal;
    color: #ed1c24;
}
.tooltip {
    position: absolute;
    top: 52px;
    left: 87px;
    width: 206px;
    height: 22px;
    padding: 0 6px;
    border: 1px solid #dddddd;
    border-radius: 3px;
    background-color: #f9f9f9;
    box-shadow: 2px 2px 3px rgba(0, 0, 0, 0.3);
    font-size: 11px;
    line-height: 16px;
    color: #575757;
}

/* scrollbar */
.scrollbar {
    width: 16px;
    padding: 16px 7px 51px;
    background-color: #f0f0f0;
    border-radius: 0 0 8px 0;
}
.thumb {
    height: 100%;
    background-color: #868686;
}
```
